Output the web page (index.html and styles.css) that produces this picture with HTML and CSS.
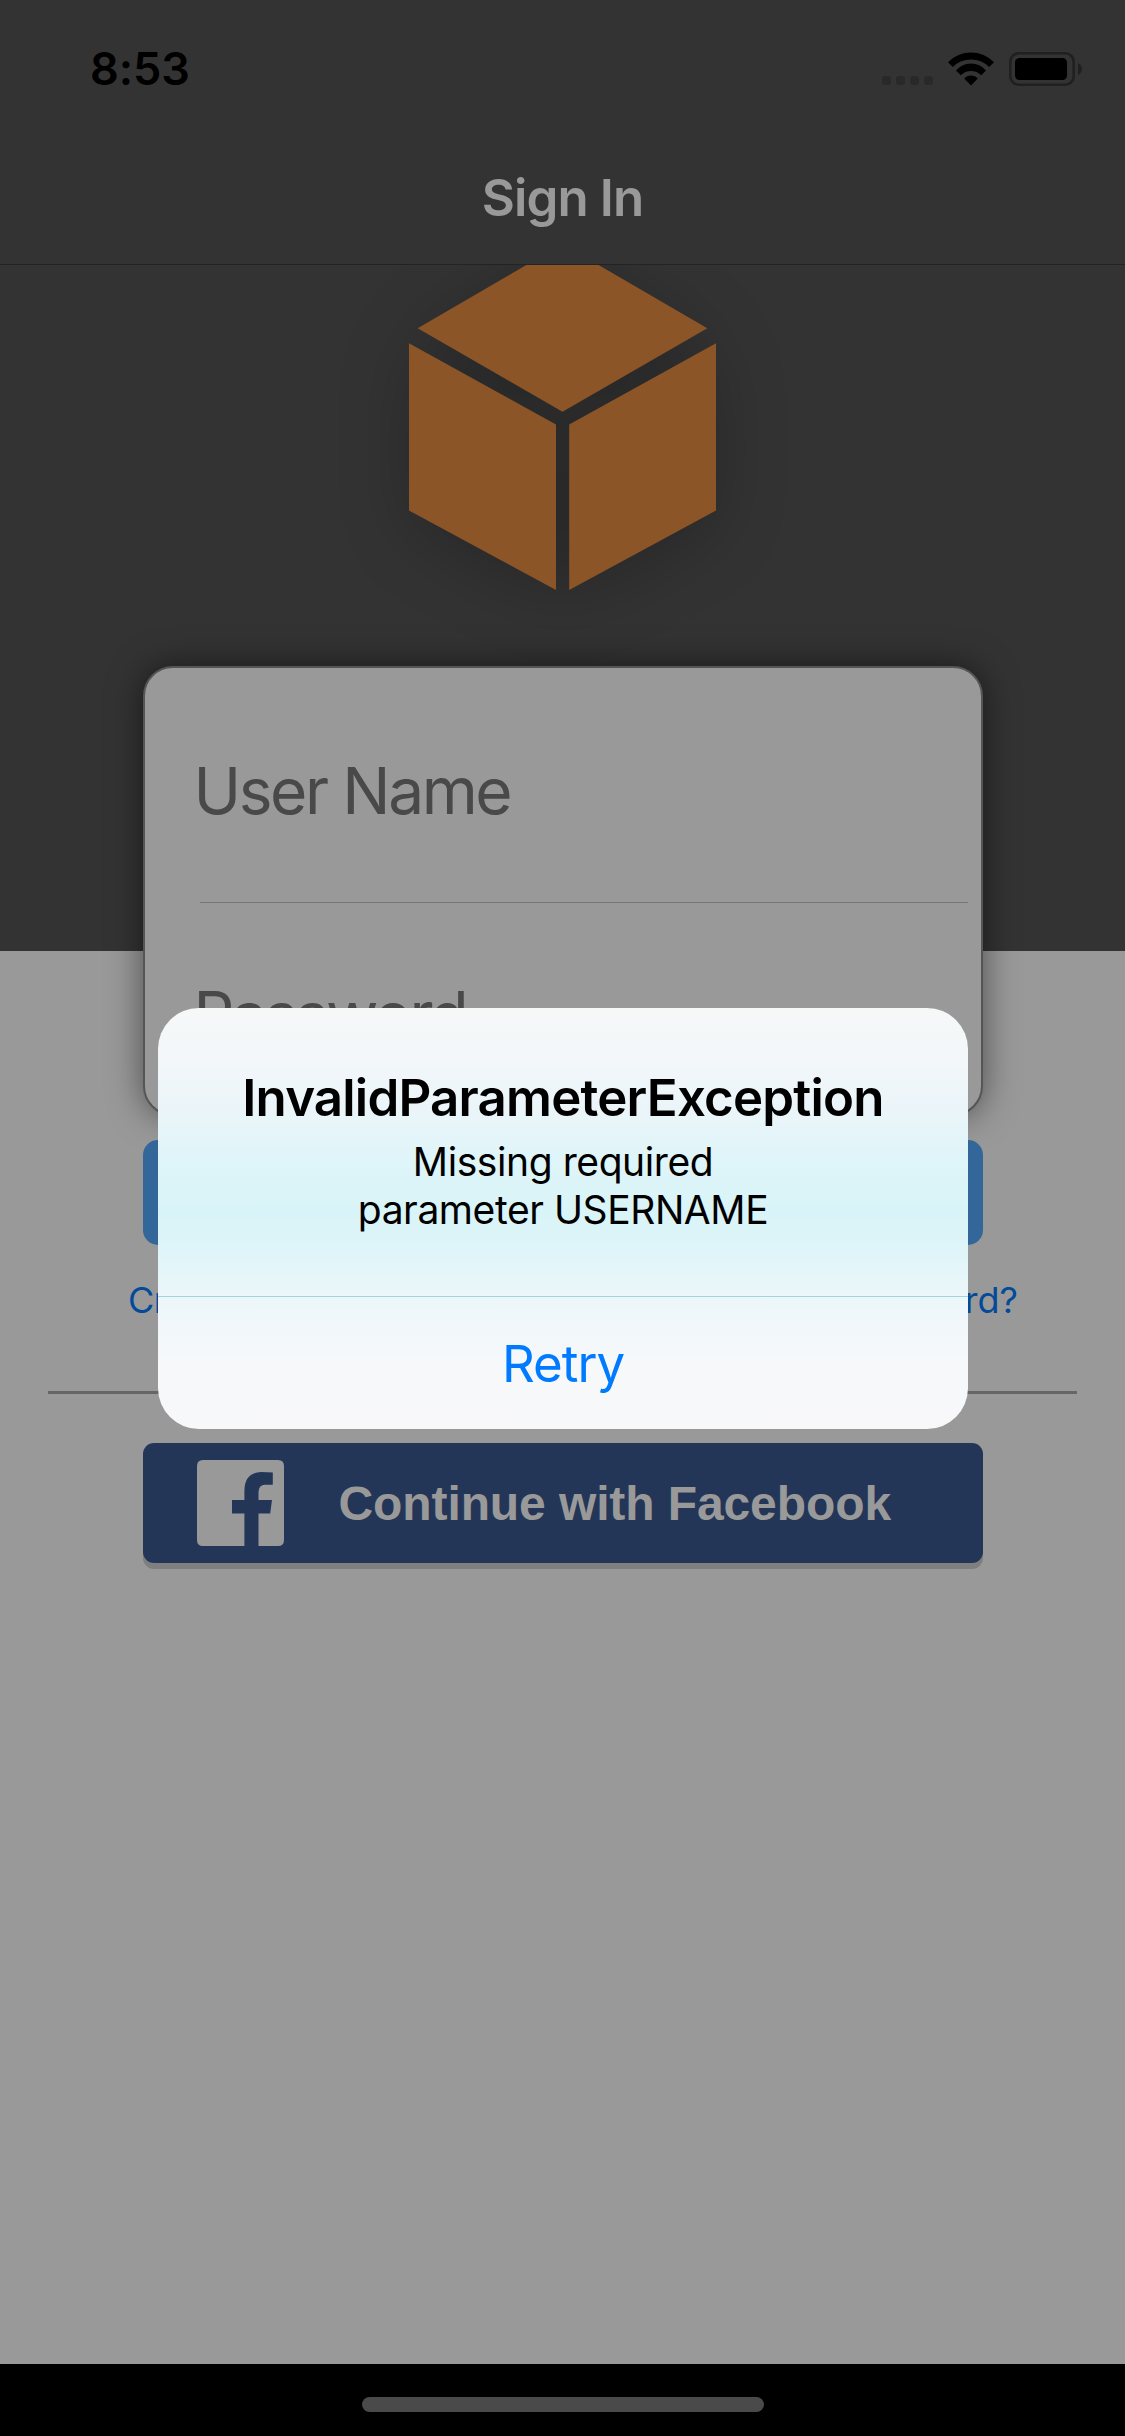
FILE: index.html
```html
<!DOCTYPE html>
<html lang="en">
<head>
<meta charset="utf-8">
<title>Sign In</title>
<link rel="stylesheet" href="styles.css">
</head>
<body>
<div class="screen">
  <header class="header">
    <div class="status">
      <span class="time">8:53</span>
      <div class="indicators">
        <div class="signal"><i></i><i></i><i></i><i></i></div>
        <svg class="wifi" width="46" height="34" viewBox="0 0 46 34">
          <path d="M0 10.3Q9.5 .5 23 .5T46 10.3L41.2 15Q33.5 7.6 23 7.6T4.8 15Z"/>
          <path d="M8 18.4Q14.2 11.6 23 11.6T38 18.4L33.2 23.2Q29 18.9 23 18.9T12.8 23.2Z"/>
          <path d="M16.2 26.6Q18.8 23.4 23 23.4T29.8 26.6L23 33.5Z"/>
        </svg>
        <svg class="battery" width="73" height="34" viewBox="0 0 73 34">
          <rect x="1.3" y="1.3" width="63.4" height="31.4" rx="8.5" fill="none" stroke="#202020" stroke-width="2.6"/>
          <rect x="6" y="6" width="52" height="22" rx="4.5"/>
          <path d="M69 11Q73 13 73 17T69 23Z" fill="#202020"/>
        </svg>
      </div>
    </div>
    <h1 class="title">Sign In</h1>
  </header>

  <main class="main">
    <svg class="logo" width="461" height="401" viewBox="332 265 461 401">
      <g class="cube">
        <path d="M562.5 244L707.3 328.3 562.5 411.8 417.7 328.3Z"/>
        <path d="M409 343.3L556 424.5V590L409 510.5Z"/>
        <path d="M716 343.3L569.2 424.5V590L716 510.5Z"/>
      </g>
    </svg>
    <form class="card">
      <div class="field"><span class="user">User Name</span></div>
      <div class="field"><span class="pass">Password</span></div>
    </form>
    <div class="submit"></div>
    <div class="links"><a class="create">Create new account</a><a class="forgot">Forgot password?</a></div>
    <div class="rule"></div>
    <div class="facebook">
      <svg class="fb-icon" width="87" height="86" viewBox="0 0 87 86">
        <path d="M6 0H81Q87 0 87 6V80Q87 86 81 86H61.5V53.5H73.2L75 40H61.5V32.5Q61.5 24.7 68 24.7H75.8V12.6Q71 12 64 12Q47.4 12.5 47.4 31V40H35V53.5H47.4V86H6Q0 86 0 80V6Q0 0 6 0Z"/>
      </svg>
      <span class="fb-label">Continue with Facebook</span>
    </div>
  </main>

  <footer class="home"><div class="pill"></div></footer>

  <div class="alert">
    <div class="alert-body">
      <h2 class="alert-title">InvalidParameterException</h2>
      <p class="msg m1">Missing required</p>
      <p class="msg m2">parameter USERNAME</p>
    </div>
    <div class="retry"><span>Retry</span></div>
  </div>
</div>
</body>
</html>
```
FILE: styles.css
```css
* { box-sizing: border-box; margin: 0; padding: 0; }
body { font-family: Inter, "Liberation Sans", sans-serif; background: #999; }
span, a, h1, h2, p { white-space: nowrap; }

.screen {
  position: relative;
  width: 1125px;
  height: 2436px;
  display: flex;
  flex-direction: column;
  overflow: hidden;
}

.header { height: 265px; background: #333; border-bottom: 1px solid #232323; }
.status {
  height: 132px;
  padding: 42px 43px 0 90px;
  display: flex;
  justify-content: space-between;
}
.time { font-size: 45px; line-height: 54px; font-weight: 600; letter-spacing: -0.1px; }
.indicators { display: flex; height: 54px; padding-top: 10px; }
.signal { display: flex; gap: 5px; padding-top: 24px; margin-right: 15px; }
.signal i { width: 9px; height: 9px; border-radius: 3px; background: #292929; }
.wifi { margin-right: 15px; }
.title {
  font-size: 51px;
  line-height: 62px;
  font-weight: 600;
  color: #999;
  text-align: center;
  margin-top: 35px;
  letter-spacing: -0.9px;
}

.main {
  height: 2099px;
  display: flex;
  flex-direction: column;
  align-items: center;
  background: linear-gradient(#333 686px, #999 686px);
}
.logo { display: block; flex: none; }
.cube { fill: #8c5528; filter: drop-shadow(0 12px 34px rgba(0, 0, 0, .22)); }

.card {
  flex: none;
  width: 840px;
  height: 450px;
  border-radius: 30px;
  border: 2px solid #555;
  background: #999;
  box-shadow: 0 0 34px rgba(0, 0, 0, .5);
  padding: 0 13px 0 55px;
}
.field { height: 213px; padding-top: 73px; }
.field:first-child { height: 235px; padding-top: 84px; border-bottom: 1px solid #777; }
.field span { display: block; margin-left: -6px; font-size: 64px; line-height: 78px; color: #494949; letter-spacing: -2.4px; }
.field .pass { letter-spacing: -3px; }

.submit {
  flex: none;
  width: 840px;
  height: 105px;
  margin-top: 24px;
  border-radius: 15px;
  background: #336799;
}
.links {
  width: 890px;
  margin: 33px 0 0 21px;
  height: 44px;
  display: flex;
  justify-content: space-between;
  font-size: 36px;
  line-height: 44px;
  color: #034a99;
}
.create { letter-spacing: -0.6px; }
.rule { width: 1029px; height: 3px; margin-top: 69px; background: #666; flex: none; }
.facebook {
  flex: none;
  width: 840px;
  height: 120px;
  margin-top: 49px;
  padding-left: 54px;
  border-radius: 11px;
  background: #243658;
  box-shadow: 0 6px #7f7f7f;
  display: flex;
  align-items: center;
}
.fb-icon { fill: #999; }
.fb-label {
  margin: 2px 0 0 55px;
  font: bold 48px/56px "Liberation Sans", Arial, sans-serif;
  letter-spacing: -0.1px;
  color: #999;
}

.home { height: 72px; background: #000; display: flex; justify-content: center; padding-top: 33px; }
.pill { width: 402px; height: 15px; border-radius: 8px; background: #4a4a4a; }

.alert {
  position: absolute;
  left: 158px;
  top: 1008px;
  width: 810px;
  height: 421px;
  border-radius: 41px;
  background: linear-gradient(#f6f8f8, #f3f7f9 50px, #ebf5f9 100px, #def5f9 155px, #d9f4f8 205px, #def5f9 240px, #e8f6f9 275px, #f0f7fa 310px, #f6f8fa 355px, #f8f8f9);
  text-align: center;
  color: #000;
}
.alert-body { height: 289px; padding-top: 59px; border-bottom: 1px solid #a4d2df; }
.alert-title { font-size: 51px; line-height: 62px; font-weight: 600; letter-spacing: -0.8px; }
.msg { font-size: 39px; line-height: 48px; letter-spacing: -0.42px; }
.m1 { margin-top: 9px; }
.retry { padding-top: 36px; font-size: 51px; line-height: 62px; color: #007aff; letter-spacing: -1px; }
```
